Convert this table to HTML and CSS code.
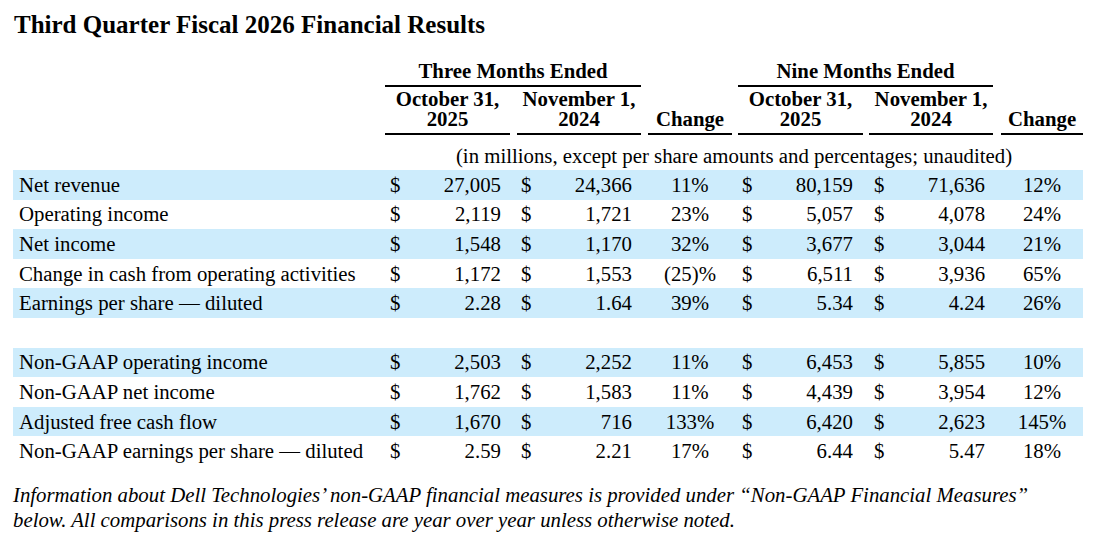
FILE: index.html
```html
<!DOCTYPE html>
<html lang="en">
<head>
<meta charset="utf-8">
<title>Third Quarter Fiscal 2026 Financial Results</title>
<link rel="stylesheet" href="styles.css">
</head>
<body>
<div class="page">
  <h1 class="title">Third Quarter Fiscal 2026 Financial Results</h1>
  <table class="fin">
    <colgroup>
      <col class="c-label"><col class="c-a1"><col class="c-a2"><col class="c-ch1"><col class="c-a3"><col class="c-a4"><col class="c-ch2">
    </colgroup>
    <thead>
      <tr class="h-period">
        <th></th>
        <th colspan="2"><div class="hl g0">Three Months Ended</div></th>
        <th></th>
        <th colspan="2"><div class="hl g6">Nine Months Ended</div></th>
        <th></th>
      </tr>
      <tr class="h-date">
        <th></th>
        <th><div class="hl g0">October 31,<br>2025</div></th>
        <th><div class="hl g7">November 1,<br>2024</div></th>
        <th><div class="hl g7">Change</div></th>
        <th><div class="hl g6">October 31,<br>2025</div></th>
        <th><div class="hl g6">November 1,<br>2024</div></th>
        <th><div class="hl g8">Change</div></th>
      </tr>
      <tr class="h-note">
        <th></th>
        <th colspan="6">(in millions, except per share amounts and percentages; unaudited)</th>
      </tr>
    </thead>
    <tbody>
      <tr class="shade">
        <td class="label">Net revenue</td>
        <td><div class="amt a1"><span>$</span><span>27,005</span></div></td>
        <td><div class="amt a2"><span>$</span><span>24,366</span></div></td>
        <td class="chg c1">11%</td>
        <td><div class="amt a3"><span>$</span><span>80,159</span></div></td>
        <td><div class="amt a4"><span>$</span><span>71,636</span></div></td>
        <td class="chg c2">12%</td>
      </tr>
      <tr>
        <td class="label">Operating income</td>
        <td><div class="amt a1"><span>$</span><span>2,119</span></div></td>
        <td><div class="amt a2"><span>$</span><span>1,721</span></div></td>
        <td class="chg c1">23%</td>
        <td><div class="amt a3"><span>$</span><span>5,057</span></div></td>
        <td><div class="amt a4"><span>$</span><span>4,078</span></div></td>
        <td class="chg c2">24%</td>
      </tr>
      <tr class="shade">
        <td class="label">Net income</td>
        <td><div class="amt a1"><span>$</span><span>1,548</span></div></td>
        <td><div class="amt a2"><span>$</span><span>1,170</span></div></td>
        <td class="chg c1">32%</td>
        <td><div class="amt a3"><span>$</span><span>3,677</span></div></td>
        <td><div class="amt a4"><span>$</span><span>3,044</span></div></td>
        <td class="chg c2">21%</td>
      </tr>
      <tr>
        <td class="label">Change in cash from operating activities</td>
        <td><div class="amt a1"><span>$</span><span>1,172</span></div></td>
        <td><div class="amt a2"><span>$</span><span>1,553</span></div></td>
        <td class="chg c1">(25)%</td>
        <td><div class="amt a3"><span>$</span><span>6,511</span></div></td>
        <td><div class="amt a4"><span>$</span><span>3,936</span></div></td>
        <td class="chg c2">65%</td>
      </tr>
      <tr class="shade">
        <td class="label">Earnings per share — diluted</td>
        <td><div class="amt a1"><span>$</span><span>2.28</span></div></td>
        <td><div class="amt a2"><span>$</span><span>1.64</span></div></td>
        <td class="chg c1">39%</td>
        <td><div class="amt a3"><span>$</span><span>5.34</span></div></td>
        <td><div class="amt a4"><span>$</span><span>4.24</span></div></td>
        <td class="chg c2">26%</td>
      </tr>
      <tr class="gap"><td colspan="7"></td></tr>
      <tr class="shade">
        <td class="label">Non-GAAP operating income</td>
        <td><div class="amt a1"><span>$</span><span>2,503</span></div></td>
        <td><div class="amt a2"><span>$</span><span>2,252</span></div></td>
        <td class="chg c1">11%</td>
        <td><div class="amt a3"><span>$</span><span>6,453</span></div></td>
        <td><div class="amt a4"><span>$</span><span>5,855</span></div></td>
        <td class="chg c2">10%</td>
      </tr>
      <tr>
        <td class="label">Non-GAAP net income</td>
        <td><div class="amt a1"><span>$</span><span>1,762</span></div></td>
        <td><div class="amt a2"><span>$</span><span>1,583</span></div></td>
        <td class="chg c1">11%</td>
        <td><div class="amt a3"><span>$</span><span>4,439</span></div></td>
        <td><div class="amt a4"><span>$</span><span>3,954</span></div></td>
        <td class="chg c2">12%</td>
      </tr>
      <tr class="shade">
        <td class="label">Adjusted free cash flow</td>
        <td><div class="amt a1"><span>$</span><span>1,670</span></div></td>
        <td><div class="amt a2"><span>$</span><span>716</span></div></td>
        <td class="chg c1">133%</td>
        <td><div class="amt a3"><span>$</span><span>6,420</span></div></td>
        <td><div class="amt a4"><span>$</span><span>2,623</span></div></td>
        <td class="chg c2">145%</td>
      </tr>
      <tr>
        <td class="label">Non-GAAP earnings per share — diluted</td>
        <td><div class="amt a1"><span>$</span><span>2.59</span></div></td>
        <td><div class="amt a2"><span>$</span><span>2.21</span></div></td>
        <td class="chg c1">17%</td>
        <td><div class="amt a3"><span>$</span><span>6.44</span></div></td>
        <td><div class="amt a4"><span>$</span><span>5.47</span></div></td>
        <td class="chg c2">18%</td>
      </tr>
    </tbody>
  </table>
  <p class="note">Information about Dell Technologies’ non-GAAP financial measures is provided under “Non-GAAP Financial Measures” below. All comparisons in this press release are year over year unless otherwise noted.</p>
</div>
</body>
</html>
```

FILE: styles.css
```css
html, body {
  margin: 0;
  padding: 0;
  background: #ffffff;
}

body {
  font-family: "Liberation Serif", "Times New Roman", serif;
  color: #000000;
}

.page {
  padding: 10px 13px 0 13px;
}

.title {
  margin: 0;
  font-size: 25px;
  line-height: 30px;
  font-weight: bold;
  padding-left: 1px;
}

.fin {
  margin-top: 21px;
  width: 1070px;
  table-layout: fixed;
  border-collapse: separate;
  border-spacing: 0;
  font-size: 20.8px;
  line-height: 20px;
}

.c-label { width: 372px; }
.c-a1 { width: 125px; }
.c-a2 { width: 131px; }
.c-ch1 { width: 91px; }
.c-a3 { width: 131px; }
.c-a4 { width: 130px; }
.c-ch2 { width: 90px; }

.fin th,
.fin td {
  padding: 0;
  font-weight: normal;
  white-space: nowrap;
}

.fin thead th {
  font-weight: bold;
  text-align: center;
  vertical-align: bottom;
}

.hl {
  border-bottom: 2px solid #000000;
  padding-bottom: 4px;
}

.h-date .hl {
  padding-top: 2px;
}

.g0 { margin-left: 0; }
.g6 { margin-left: 6px; }
.g7 { margin-left: 7px; }
.g8 { margin-left: 8px; }

.fin thead .h-note th {
  font-weight: normal;
  padding-top: 11px;
  padding-bottom: 4px;
}

.fin tbody td {
  height: 29.6px;
  vertical-align: middle;
}

.shade td {
  background: #cdecfc;
}

.gap td {
  height: 30px;
}

.fin td.label {
  padding-left: 6px;
}

.amt {
  display: flex;
  justify-content: space-between;
}

.a1 { padding: 0 9px 0 5px; }
.a2 { padding: 0 9px 0 11px; }
.a3 { padding: 0 10px 0 10px; }
.a4 { padding: 0 8px 0 11px; }

.chg {
  text-align: center;
}

.fin td.c1 { padding-left: 7px; }
.fin td.c2 { padding-left: 8px; }

.note {
  margin: 16px 0 0 0;
  width: 1030px;
  font-style: italic;
  font-size: 20.8px;
  line-height: 25px;
}
```
